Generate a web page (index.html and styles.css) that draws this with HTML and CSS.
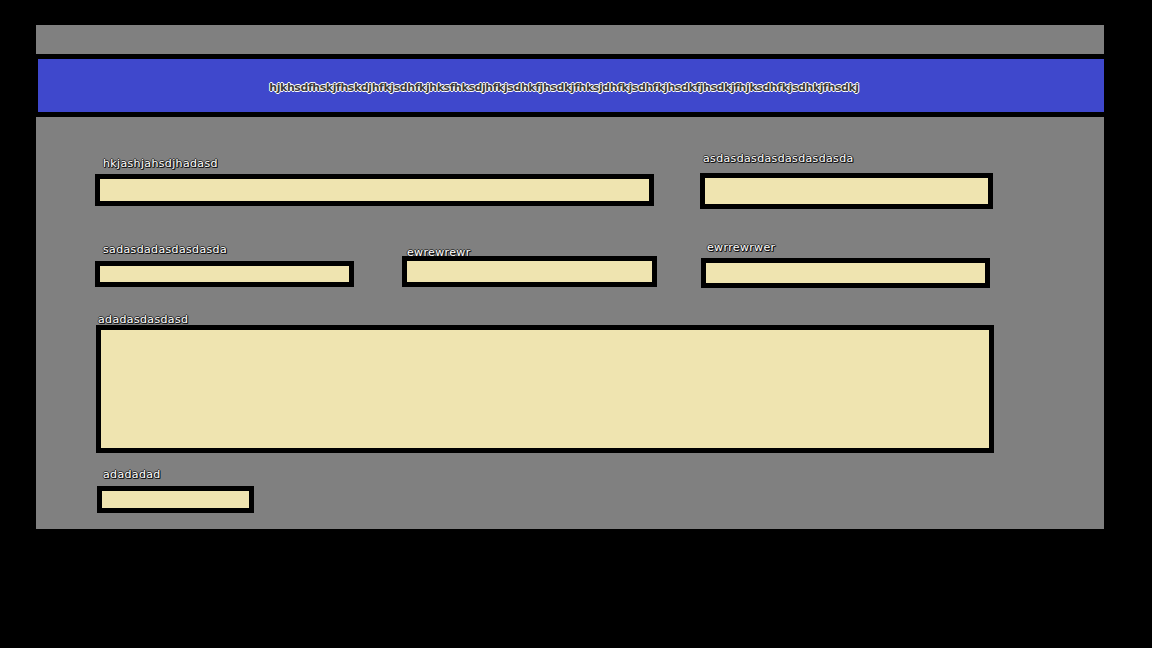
FILE: index.html
```html
<!DOCTYPE html>
<html>
<head>
<meta charset="utf-8">
<link rel="stylesheet" href="styles.css">
</head>
<body>
<div class="page">
  <div class="topbar"></div>
  <div class="banner"><span class="title">hjkhsdfhskjfhskdjhfkjsdhfkjhksfhksdjhfkjsdhkfjhsdkjfhksjdhfkjsdhfkjhsdkfjhsdkjfhjksdhfkjsdhkjfhsdkj</span></div>
  <div class="form">
    <div class="row row-1">
      <div class="field field-name">
        <div class="label">hkjashjahsdjhadasd</div>
        <div class="box"></div>
      </div>
      <div class="field field-side">
        <div class="label">asdasdasdasdasdasdasda</div>
        <div class="box"></div>
      </div>
    </div>
    <div class="row row-2">
      <div class="field field-a">
        <div class="label">sadasdadasdasdasda</div>
        <div class="box"></div>
      </div>
      <div class="field field-b">
        <div class="label">ewrewrewr</div>
        <div class="box"></div>
      </div>
      <div class="field field-c">
        <div class="label">ewrrewrwer</div>
        <div class="box"></div>
      </div>
    </div>
    <div class="row row-3">
      <div class="field field-area">
        <div class="label">adadasdasdasd</div>
        <div class="box"></div>
      </div>
    </div>
    <div class="row row-4">
      <div class="field field-small">
        <div class="label">adadadad</div>
        <div class="box"></div>
      </div>
    </div>
  </div>
</div>
</body>
</html>
```

FILE: styles.css
```css
html, body {
  margin: 0;
  padding: 0;
  background: #000;
  font-family: "DejaVu Sans", "Liberation Sans", sans-serif;
}

.page {
  width: 1068px;
  padding: 25px 0 0 36px;
}

.topbar {
  height: 29px;
  background: #808080;
}

.banner {
  margin: 5px 0 0 2px;
  height: 53px;
  box-sizing: border-box;
  background: #3f48cc;
  display: flex;
  align-items: center;
  justify-content: center;
  padding: 3px 14px 0 0;
}

.title {
  font-size: 11px;
  font-weight: bold;
  color: #3a3a3a;
  letter-spacing: -0.42px;
  text-shadow: 1px 0 0 #fff, -1px 0 0 #fff, 0 1px 0 #fff, 0 -1px 0 #fff;
}

.form {
  margin-top: 5px;
  height: 412px;
  box-sizing: border-box;
  background: #808080;
  padding: 35px 0 0 59px;
}

.row {
  display: flex;
  align-items: flex-start;
}

.row-2 { margin-top: 32px; }
.row-3 { margin-top: 25px; }
.row-4 { margin-top: 15px; }

.field {
  display: flex;
  flex-direction: column;
}

.label {
  font-size: 11px;
  line-height: 14px;
  height: 14px;
  color: #fff;
  letter-spacing: 0.35px;
  white-space: nowrap;
  text-shadow: 1px 1px 0 #111, 1px 0 0 #222, -1px 0 0 #333, 0 -1px 0 #333, 0 1px 0 #222;
}

.box {
  position: relative;
  box-sizing: border-box;
  border: 5px solid #000;
  background: #efe4b0;
}

.field-name { width: 559px; margin-top: 5px; }
.field-name .label { padding-left: 8px; margin-bottom: 3px; }
.field-name .box { height: 32px; }

.field-side { width: 293px; margin-left: 46px; }
.field-side .label { padding-left: 3px; margin-bottom: 7px; }
.field-side .box { height: 36px; }

.field-a { width: 259px; margin-top: 2px; }
.field-a .label { padding-left: 8px; margin-bottom: 4px; }
.field-a .box { height: 26px; }

.field-b { width: 255px; margin-left: 48px; margin-top: 5px; }
.field-b .label { padding-left: 5px; margin-bottom: -4px; }
.field-b .box { height: 31px; }

.field-c { width: 289px; margin-left: 44px; }
.field-c .label { padding-left: 6px; margin-bottom: 3px; }
.field-c .box { height: 30px; }

.field-area { width: 898px; margin-left: 1px; }
.field-area .label { padding-left: 2px; margin-bottom: -2px; }
.field-area .box { height: 128px; }

.field-small { width: 157px; margin-left: 2px; }
.field-small .label { padding-left: 6px; margin-bottom: 4px; }
.field-small .box { height: 27px; }
```
